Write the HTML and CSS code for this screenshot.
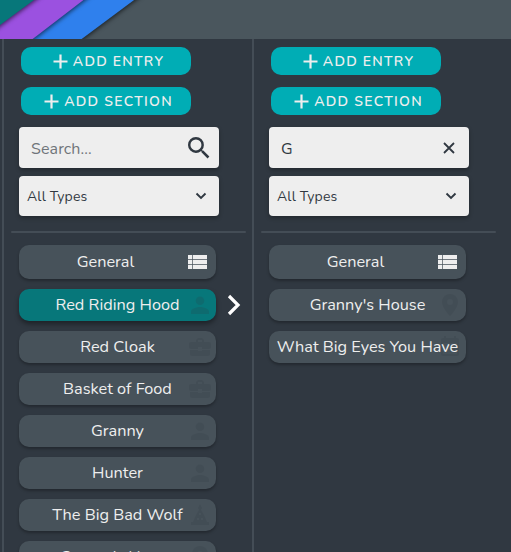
FILE: index.html
```html
<!DOCTYPE html>
<html lang="en">
<head>
<meta charset="utf-8">
<title>Story entries</title>
<link rel="stylesheet" href="styles.css">
</head>
<body>
<svg class="defs" aria-hidden="true">
  <symbol id="plus" viewBox="0 0 15 15"><path d="M7.5 .5v14M.5 7.5h14" fill="none" stroke="currentColor" stroke-width="2.2"/></symbol>
  <symbol id="search" viewBox="3 3 18 18"><path d="M15.5 14h-.79l-.28-.27A6.47 6.47 0 0 0 16 9.500 6.500 6.500 0 1 0 9.500 16c1.610 0 3.090-.59 4.230-1.570l.27.28v.79l5 4.990L20.490 19l-4.990-5zm-6 0a4.500 4.500 0 1 1 0-9 4.500 4.500 0 0 1 0 9z" fill="currentColor"/></symbol>
  <symbol id="chevron" viewBox="0 0 12 8"><path d="M1.500 1.500L6 6l4.500-4.500" fill="none" stroke="currentColor" stroke-width="1.900"/></symbol>
  <symbol id="close" viewBox="0 0 12 12"><path d="M1 1l10 10M11 1L1 11" fill="none" stroke="currentColor" stroke-width="1.800"/></symbol>
  <symbol id="list" viewBox="0 0 19 14"><path d="M0 0h4.300v4.300H0zM5 0h14v4.300H5zM0 5h4.300v4.300H0zM5 5h14v4.300H5zM0 10h4.300v4H0zM5 10h14v4H5z" fill="currentColor"/></symbol>
  <symbol id="person" viewBox="0 0 24 24"><path d="M12 12a4.300 4.300 0 1 0 0-8.600 4.300 4.300 0 0 0 0 8.600zm0 2c-3 0-9 1.500-9 4.500V21h18v-2.500c0-3-6-4.500-9-4.500z" fill="currentColor"/></symbol>
  <symbol id="case" viewBox="0 0 24 24"><path d="M10 16v-1H2v4c0 1.100.9 2 2 2h16c1.100 0 2-.9 2-2v-4h-8v1zM21 7h-5V5l-2-2h-4L8 5v2H3c-1.100 0-2 .9-2 2v3c0 1.100.9 2 2 2h7v-2h4v2h7c1.100 0 2-.9 2-2V9c0-1.100-.9-2-2-2zm-7 0h-4V5h4z" fill="currentColor"/></symbol>
  <symbol id="creature" viewBox="0 0 24 24"><path d="M12 1l2 4-1 2 3 5 3 7h2v3H3v-3h2l3-7 3-5-1-2zM9 15v2h2v-2zm4 0v2h2v-2zm-2-5v2h2v-2z" fill="currentColor" fill-rule="evenodd"/></symbol>
  <symbol id="pin" viewBox="0 0 24 24"><path d="M12 1a8 8 0 0 0-8 8c0 6 8 14 8 14s8-8 8-14a8 8 0 0 0-8-8zm0 11a3 3 0 1 1 0-6 3 3 0 0 1 0 6z" fill="currentColor"/></symbol>
  <symbol id="event" viewBox="0 0 24 24"><path d="M19 3h-1V1h-2v2H8V1H6v2H5a2 2 0 0 0-2 2v14c0 1.100.9 2 2 2h14a2 2 0 0 0 2-2V5a2 2 0 0 0-2-2zm0 16H5V8h14zm-2-7h-5v5h5z" fill="currentColor" fill-rule="evenodd"/></symbol>
</svg>
<header class="banner">
  <svg class="stripes" width="150" height="39" viewBox="0 0 150 39">
    <path class="stripe blue" d="M-10-10H147.500L81 39.500 61 54H-10z"/>
    <path class="stripe purple" d="M-10-10H96.500L32 39.500 12 54H-10z"/>
    <path class="stripe teal" d="M-10-10H47.500L0 25-10 32.500z"/>
  </svg>
</header>
<main class="columns">
  <section class="column">
    <div class="actions">
      <button class="add"><svg class="plus"><use href="#plus"/></svg><span>ADD ENTRY</span></button>
      <button class="add"><svg class="plus"><use href="#plus"/></svg><span>ADD SECTION</span></button>
    </div>
    <div class="field search"><span class="placeholder">Search...</span><svg class="search-icon"><use href="#search"/></svg></div>
    <div class="field select"><span>All Types</span><svg class="chevron"><use href="#chevron"/></svg></div>
    <div class="rule"></div>
    <div class="entries">
      <div class="entry general"><span>General</span><svg class="list-icon"><use href="#list"/></svg></div>
      <div class="entry active"><span>Red Riding Hood</span><svg class="kind"><use href="#person"/></svg><svg class="pointer" viewBox="0 0 14 22"><path d="M2 2l9 9-9 9"/></svg></div>
      <div class="entry"><span>Red Cloak</span><svg class="kind"><use href="#case"/></svg></div>
      <div class="entry"><span>Basket of Food</span><svg class="kind"><use href="#case"/></svg></div>
      <div class="entry"><span>Granny</span><svg class="kind"><use href="#person"/></svg></div>
      <div class="entry"><span>Hunter</span><svg class="kind"><use href="#person"/></svg></div>
      <div class="entry"><span>The Big Bad Wolf</span><svg class="kind"><use href="#creature"/></svg></div>
      <div class="entry"><span>Granny's House</span><svg class="kind"><use href="#pin"/></svg></div>
    </div>
  </section>
  <section class="column">
    <div class="actions">
      <button class="add"><svg class="plus"><use href="#plus"/></svg><span>ADD ENTRY</span></button>
      <button class="add"><svg class="plus"><use href="#plus"/></svg><span>ADD SECTION</span></button>
    </div>
    <div class="field search"><span>G</span><svg class="close-icon"><use href="#close"/></svg></div>
    <div class="field select"><span>All Types</span><svg class="chevron"><use href="#chevron"/></svg></div>
    <div class="rule"></div>
    <div class="entries">
      <div class="entry general"><span>General</span><svg class="list-icon"><use href="#list"/></svg></div>
      <div class="entry"><span>Granny's House</span><svg class="kind"><use href="#pin"/></svg></div>
      <div class="entry"><span>What Big Eyes You Have</span><svg class="kind"><use href="#event"/></svg></div>
    </div>
  </section>
</main>
</body>
</html>
```
FILE: styles.css
```css
* { box-sizing: border-box; }
body {
  margin: 0;
  height: 552px;
  overflow: hidden;
  background: #303841;
  color: #eee;
  font-family: Nunito, Lato, "Open Sans", sans-serif;
}
svg { display: block; flex: none; }
.defs { display: none; }
.banner { height: 39px; background: #4a565d; overflow: hidden; }
.stripe { filter: drop-shadow(1px 1px 2px rgba(0, 0, 0, .6)); }
.blue { fill: #2f80ed; }
.purple { fill: #9b51e0; }
.teal { fill: #07777a; }
.columns { display: flex; height: 513px; padding-left: 2px; }
.column {
  flex: none;
  width: 250px;
  padding: 8px 0 0 15px;
  border-left: 2px solid #444d56;
}
.actions { display: flex; flex-direction: column; gap: 12px; padding-left: 2px; }
.add {
  display: flex;
  align-items: center;
  justify-content: center;
  gap: 5px;
  width: 170px;
  height: 28px;
  padding: 0 0 0 5px;
  border: 0;
  border-radius: 10px;
  background: #00adb5;
  color: #eee;
  font: 600 14px Nunito, Lato, sans-serif;
  letter-spacing: 1.25px;
}
.plus { width: 15px; height: 15px; }
.field {
  display: flex;
  align-items: center;
  justify-content: space-between;
  width: 200px;
  border-radius: 4px;
  background: #eee;
  color: #303841;
  box-shadow: 0 2px 4px rgba(0, 0, 0, .3);
}
.search { height: 41px; margin-top: 12px; padding: 2px 9px 0 12px; font-size: 16px; letter-spacing: .1px; }
.placeholder { color: #70757a; }
.search-icon { width: 22px; height: 22px; margin-top: -1px; }
.close-icon { width: 12px; height: 12px; margin-right: 5px; margin-top: -2px; }
.select { height: 40px; margin-top: 8px; padding: 0 12px 0 8px; font-size: 14px; letter-spacing: .15px; }
.chevron { width: 12px; height: 8px; }
.rule { width: 235px; height: 2px; margin: 15px 0 12px -8.5px; border-radius: 1px; background: #444d56; }
.entries { display: flex; flex-direction: column; gap: 10px; width: 197px; }
.entry {
  position: relative;
  display: flex;
  flex: none;
  align-items: center;
  justify-content: center;
  height: 32px;
  border-radius: 10px;
  background: #47525a;
  box-shadow: 0 2px 3px rgba(0, 0, 0, .28);
  font-size: 16.3px;
  line-height: 22px;
  white-space: nowrap;
}
.entry span { position: relative; z-index: 1; }
.general { height: 34px; padding-right: 24px; }
.active { background: #07777a; box-shadow: 0 3px 5px rgba(0, 0, 0, .4); }
.list-icon { position: absolute; right: 9px; top: 10px; width: 19px; height: 14px; }
.kind { position: absolute; right: 4px; top: 4px; width: 24px; height: 24px; color: #303841; opacity: .18; }
.pointer { position: absolute; right: -25px; top: 5px; width: 14px; height: 22px; fill: none; stroke: #fff; stroke-width: 3.2; }
```
